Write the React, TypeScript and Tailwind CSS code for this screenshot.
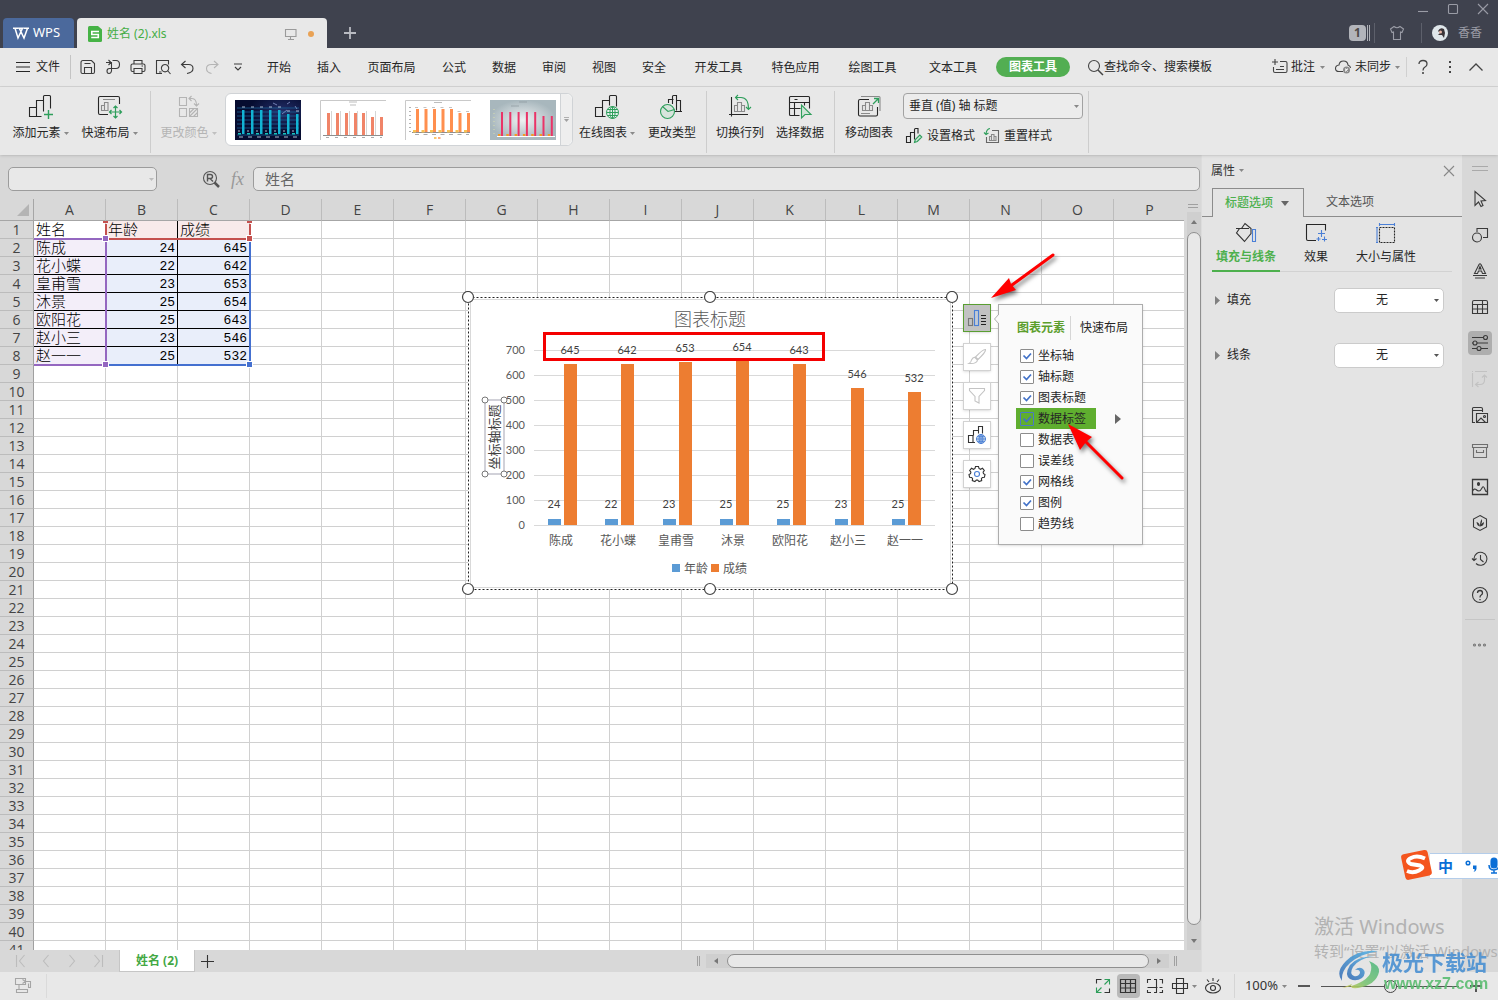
import React, { useState } from "react";
import clsx from "clsx";

type IconProps = { w?: number; h?: number; className?: string; children: React.ReactNode };

const Icon: React.FC<IconProps> = ({ w = 16, h = 16, className, children }) => (
  <svg
    width={w}
    height={h}
    viewBox={`0 0 ${w} ${h}`}
    fill="none"
    stroke="currentColor"
    strokeWidth="1.1"
    className={clsx("shrink-0 overflow-visible", className)}
    aria-hidden="true"
  >
    {children}
  </svg>
);

const Caret: React.FC<{ className?: string }> = ({ className }) => (
  <svg width="5" height="3" viewBox="0 0 5 3" className={clsx("shrink-0", className)} aria-hidden="true">
    <path d="M0 0h5L2.5 3z" fill="currentColor" />
  </svg>
);

const GREEN = "#2e9e5b";
const BLUE = "#4a7fd6";

const Globe: React.FC<{ cx: number; cy: number; r: number; color: string }> = ({ cx, cy, r, color }) => (
  <g stroke={color} fill="none" strokeWidth="1">
    <circle cx={cx} cy={cy} r={r} fill="#e6f0ee" />
    <ellipse cx={cx} cy={cy} rx={r / 2.3} ry={r} />
    <path d={`M${cx - r} ${cy}h${2 * r}M${cx} ${cy - r}v${2 * r}M${cx - r + 1} ${cy - r / 2}h${2 * r - 2}M${cx - r + 1} ${cy + r / 2}h${2 * r - 2}`} />
  </g>
);

/* ---------- ribbon icons ---------- */

const AddElementIcon = () => (
  <Icon w={24} h={24}>
    <path d="M12.5 21.5H.5v-9h7v9M7.5 12.5v-7h7v11M14.5 5.5v-4q0-1 1-1h5q1 0 1 1v12" />
    <path d="M19.5 15v9M15 19.5h9" stroke={GREEN} strokeWidth="1.4" />
  </Icon>
);

const QuickLayoutIcon = () => (
  <Icon w={24} h={24}>
    <path d="M21.5 9V3q0-1.500-1.500-1.500H2Q.5 1.500.5 3v15q0 1.500 1.500 1.500h8" />
    <path d="M5 4.500h12M3.500 15.500v-5h3v5zM6.500 15.500v-8h3.500v8z" stroke="#8a8a8a" />
    <path d="M17.500 11v12M11.500 17h12M15.500 13l2-2 2 2M15.500 21l2 2 2-2M13.500 15l-2 2 2 2M21.500 15l2 2-2 2" stroke={GREEN} strokeWidth="1.200" />
  </Icon>
);

const ChangeColorIcon = () => (
  <Icon w={22} h={22}>
    <path d="M1.500 1.500h7v8h-7zM1.500 12.500h7v8h-7zM11.500 12.500h8v8h-8zM11.500 17l4.500-4.500M11.500 20.500l8-8M15.500 20.500l4-4" />
    <path d="M13.500 0l-2.500 2.500 2.500 2.500M11 2.500h3q4.500 0 4.500 7M16 7.500l2.500 2.500 2.500-2.500" />
  </Icon>
);

const OnlineChartIcon = () => (
  <Icon w={24} h={24}>
    <path d="M10.500 21.500H.5v-9h7v9M7.500 12.500v-7h7v5M14.500 5.500v-4q0-1 1-1h5q1 0 1 1v10" />
    <Globe cx={17.5} cy={17.5} r={6} color={GREEN} />
  </Icon>
);

const ChangeTypeIcon = () => (
  <Icon w={24} h={24}>
    <path d="M8.500 8V4.500h5M12.500 9V1.500q0-1 1-1h3v15M16.500 5.500h4v11M15 16.500h7" />
    <circle cx="7.500" cy="16.500" r="7" stroke={GREEN} fill="#d7e4dc" />
    <path d="M2.500 11.500l5.500 5 6.500-2" stroke={GREEN} />
  </Icon>
);

const SwapAxisIcon = () => (
  <Icon w={22} h={24}>
    <path d="M2.500 2v19.500M0 19.500h19" />
    <path d="M5.500 16.500v-6h3v6zM8.500 16.500v-9h4v9zM12.500 16.500v-6h3v6z" stroke="#8a8a8a" />
    <path d="M9 0L6.500 2.500 9 5M6.500 2.500H12q7.500 0 7.500 11.500M17 12l2.500 2.500L22 12" stroke={GREEN} />
  </Icon>
);

const SelectDataIcon = () => (
  <Icon w={22} h={24}>
    <path d="M10.500 20.500H1.500q-1 0-1-1v-17q0-1 1-1h18q1 0 1 1v11M.5 7.500h20M5.500 4.500h3M5.500 8v5M.5 13.500h11M5.500 14v7M15.500 7.500v3" />
    <path d="M12.500 10v13l3.500-3.500h6z" stroke={GREEN} fill="#cfe4d7" />
  </Icon>
);

const MoveChartIcon = () => (
  <Icon w={24} h={24}>
    <path d="M12 4.500H3q-1.500 0-1.500 1.500v13.500q0 1.500 1.500 1.500h16q1.500 0 1.500-1.500V12" />
    <path d="M5.500 15.500v-5h3v5zM8.500 15.500v-8h4v8zM12.500 15.500v-5h3v5zM4 18.500h9M4 1.500h18q1 0 1 1V16" stroke="#8a8a8a" />
    <path d="M16 9l5-5M17 3.500h4.500v4.500" stroke={GREEN} strokeWidth="1.300" />
  </Icon>
);

/* ---------- title bar ---------- */

const TitleBar = () => (
  <header className="flex h-12 shrink-0 items-end bg-[#3f424e] pl-[3px]">
    <button className="flex h-[30px] w-[71px] items-center gap-1 rounded-t bg-[#4b699c] pl-[10px] text-[13px] text-white">
      <Icon w={16} h={12}>
        <path d="M0 1.300h5.500M10.500 1.300H16M2 1.300L5 11l4.500-9.700H6.300L11 11l3.500-9.700" strokeWidth="1.500" />
      </Icon>
      WPS
    </button>
    <div className="ml-[3px] flex h-[30px] w-[250px] items-center rounded-t bg-[#e8e8e8] pt-px pr-[13px] pl-[11px]">
      <svg width="14" height="16" viewBox="0 0 14 16" className="mr-[5px]" aria-hidden="true">
        <path d="M1.500 0H10l4 3.500v11q0 1.500-1.500 1.500h-11Q0 16 0 14.500v-13Q0 0 1.500 0z" fill="#46b346" />
        <path d="M11 5.500H3.800V8.500h6.500v3H3.200" fill="none" stroke="#fff" strokeWidth="1.600" />
      </svg>
      <span className="text-xs text-[#45ad45]">姓名 (2).xls</span>
      <Icon w={12} h={12} className="ml-auto text-[#9a9a9a]">
        <path d="M.5 1.500h10.500v7H.5zM5.500 8.500v3M3 11.500h6" />
      </Icon>
      <span className="ml-[11px] size-[6px] rounded-full bg-[#e9a255]" />
    </div>
    <button aria-label="新建标签" className="mb-[9px] ml-[17px] text-[#b9bbc2]">
      <Icon w={12} h={12}>
        <path d="M6 0v12M0 6h12" strokeWidth="1.800" />
      </Icon>
    </button>

    <div className="ml-auto flex h-full flex-col text-[#9a9ca6]">
      <div className="flex h-[18px] items-center justify-end gap-5 pr-[10px]">
        <button aria-label="最小化">
          <Icon w={10} h={10}><path d="M0 7.500h10" /></Icon>
        </button>
        <button aria-label="最大化">
          <Icon w={10} h={10}><rect x=".5" y=".5" width="9" height="9" rx="1" /></Icon>
        </button>
        <button aria-label="关闭">
          <Icon w={10} h={10}><path d="M0 0l10 10M10 0L0 10" /></Icon>
        </button>
      </div>
      <div className="flex h-[30px] items-center pr-4">
        <span className="flex h-4 w-[17px] items-center justify-center rounded-sm bg-[#b2b4ba] text-xs font-bold text-[#4d4a48]">1</span>
        <span className="ml-px h-4 w-[3px] border-x border-[#b2b4ba]" />
        <span className="ml-1 h-5 w-px bg-[#5d606b]" />
        <Icon w={14} h={14} className="ml-[15px]">
          <path d="M4 .5L.5 3l1.500 3.500 1.500-.5v7.500h7V6l1.500.5L13.500 3 10 .5q-3 2.500-6 0z" />
        </Icon>
        <span className="ml-[17px] h-5 w-px bg-[#5d606b]" />
        <svg width="16" height="16" viewBox="0 0 16 16" className="ml-[10px]" aria-hidden="true">
          <circle cx="8" cy="8" r="8" fill="#dfe6ea" />
          <path d="M6 6q2-4 6-2l1 4-1 5-2-3-4 0 2-2z" fill="#3a3438" />
          <circle cx="8.500" cy="7" r="1.500" fill="#e8b6a6" />
        </svg>
        <span className="ml-[10px] text-xs">香香</span>
      </div>
    </div>
  </header>
);

/* ---------- menu bar ---------- */

const shortMenus = ["公式", "数据", "审阅", "视图", "安全"];
const longMenus = ["开发工具", "特色应用", "绘图工具"];

const quickTools = [
  { label: "保存", icon: <path d="M1 3.500Q1 1.500 3 1.500h8.500l3 3V13q0 1.500-1.500 1.500H2.500Q1 14.500 1 13zM4.500 14.500v-6h7v6M4.500 4.500h6" /> },
  { label: "输出", icon: <path d="M1 3.500h4.500M3.500 1l2.500 2.500L3.500 6M7.500 1.500H11q3.500 0 3.500 4t-3.500 4H4.500q-2.500 0-2.500 2.500t2 2.500 2.500-2.500V3M6.500 12V9.500" /> },
  { label: "打印", icon: <path d="M4 5V1.500h8V5M4 12.500H2.500Q1 12.500 1 11V6.500Q1 5 2.500 5h11Q15 5 15 6.500V11q0 1.500-1.500 1.500H12M4 9.500h8v5H4zM11.500 7h1.500" /> },
  { label: "打印预览", icon: <path d="M7 14.500H1.500v-13h12v4M4 13h2.500M10 5.500a3.700 3.700 0 1 0 .1 0zM12.500 11.500l3 3.500" /> },
  { label: "撤销", icon: <path d="M5.500 2l-4 3.500L5.500 9M2 5.500h6.500Q13 5.500 13 9.500T7 14.500" /> },
];

const MenuBar = () => (
  <nav className="flex h-[39px] shrink-0 items-center border-b border-[#d3d3d3] bg-[#e8e8e8] text-xs text-[#262626]">
    <button className="flex items-center gap-[6px] pl-4">
      <Icon w={14} h={10}><path d="M0 .5h14M0 5h14M0 9.500h14" /></Icon>
      文件
    </button>
    <span className="ml-[10px] h-6 w-px bg-[#c4c4c4]" />
    <div className="ml-[9px] flex items-center gap-[9px] text-[#3c3c3c]">
      {quickTools.map((tool) => (
        <button key={tool.label} aria-label={tool.label}>
          <Icon>{tool.icon}</Icon>
        </button>
      ))}
      <button aria-label="恢复" className="text-[#b5b5b5]">
        <Icon w={14}><path d="M9 2l4 3.500L9 9M12.500 5.500H6.500Q1.500 5.500 1.500 9.500T6.500 14.500" /></Icon>
      </button>
      <button aria-label="更多" className="ml-[6px]">
        <Icon w={8} h={8}><path d="M0 1h8M1 4l3 3 3-3" /></Icon>
      </button>
    </div>
    <div className="ml-[12px] flex items-center pt-[2px]">
      <button className="w-[50px]">开始</button>
      <button className="w-[50px]">插入</button>
      <button className="w-[75px]">页面布局</button>
      {shortMenus.map((m) => (
        <button key={m} className="w-[50px]">{m}</button>
      ))}
      <div className="ml-px flex">
        {longMenus.map((m) => (
          <button key={m} className="w-[77px]">{m}</button>
        ))}
        <button className="mr-px w-[84px]">文本工具</button>
      </div>
    </div>
    <button className="h-5 w-[74px] rounded-full bg-[#52ae52] font-bold text-white">图表工具</button>
    <button className="ml-[18px] flex items-center">
      <Icon w={15} h={15} className="mr-px text-[#444]"><circle cx="6" cy="6" r="5.500" /><path d="M10 10l5 5" strokeWidth="1.500" /></Icon>
      查找命令、搜索模板
    </button>
    <div className="ml-auto flex items-center">
      <button className="flex items-center">
        <Icon className="mr-[3px] text-[#444]"><path d="M3 0v6M0 3h6M8 2.500h5.500q1.500 0 1.500 1.500v8q0 1.500-1.500 1.500H3Q1.500 13.500 1.500 12V8M4 10.500h8M8 7.500h4" /></Icon>
        批注
        <Caret className="ml-[5px] text-[#888]" />
      </button>
      <button className="ml-[10px] flex items-center">
        <Icon className="mr-1 text-[#444]">
          <path d="M8 12.500H4Q.5 12.500.5 9.500T4 6q.5-4 4.500-4T13 6q2.500 1 2.500 3" />
          <circle cx="11.500" cy="11" r="3.500" fill="#8a8a8a" stroke="none" />
          <path d="M10.200 9.700l2.600 2.600M12.800 9.700l-2.600 2.600" stroke="#fff" />
        </Icon>
        未同步
        <Caret className="ml-1 text-[#888]" />
      </button>
      <span className="ml-[6px] h-5 w-px bg-[#d0d0d0]" />
      <button aria-label="帮助" className="ml-[11px] text-[#444]">
        <Icon w={10} h={14}><path d="M1 4q0-3.500 4-3.500T9 4q0 2-2 3t-2 3.500" strokeWidth="1.300" /><path d="M5 12v2" strokeWidth="1.600" /></Icon>
      </button>
      <button aria-label="更多选项" className="ml-[21px] text-[#444]">
        <Icon w={2} h={12}><path d="M1 0v2M1 5v2M1 10v2" strokeWidth="2" /></Icon>
      </button>
      <button aria-label="收起功能区" className="mr-[15px] ml-[18px] text-[#444]">
        <Icon w={14} h={8}><path d="M.5 7.500L7 1l6.500 6.500" strokeWidth="1.300" /></Icon>
      </button>
    </div>
  </nav>
);

/* ---------- ribbon ---------- */

const RibbonButton: React.FC<{ label: string; icon: React.ReactNode; caret?: boolean; disabled?: boolean; className?: string }> = ({
  label,
  icon,
  caret,
  disabled,
  className,
}) => (
  <button
    disabled={disabled}
    className={clsx("flex h-full shrink-0 flex-col items-center pt-2 text-xs", disabled ? "text-[#b4b4b4]" : "text-[#262626]", className)}
  >
    <span className="flex h-6 items-center">{icon}</span>
    <span className="mt-[6px] flex items-center gap-[3px]">
      {label}
      {caret && <Caret className={disabled ? "text-[#c0c0c0]" : "text-[#8a8a8a]"} />}
    </span>
  </button>
);

const Divider = () => <span className="mt-1 h-[62px] w-px shrink-0 bg-[#cdcdcd]" />;

const tops = [0, 0, 0, 0, 0, 4, 4];

const Thumbs: React.FC = () => (
  <>
    <button aria-label="样式 1">
      <svg width="66" height="40" viewBox="0 0 66 40">
        <defs>
          <radialGradient id="night" cx=".7" cy=".3"><stop offset="0" stopColor="#24306b" /><stop offset="1" stopColor="#060c30" /></radialGradient>
        </defs>
        <rect width="66" height="40" fill="url(#night)" />
        <path d="M2 8h62M2 12h62M2 16h62M2 20h62M2 24h62M2 28h62M2 35h62" stroke="#1a5f94" strokeWidth=".8" />
        <path d="M38 3l4 2M52 4l3-2M60 6l2 3M47 14l5-4" stroke="#9aa8dc" strokeWidth=".7" />
        {tops.map((t, i) => (
          <g key={i}>
            <rect x={7 + i * 9} y={10 + t} width="2.500" height={24 - t} fill="#12b4d4" />
            <rect x={3 + i * 9} y="33" width="3" height="1.500" fill="#19c3bd" />
            <path d={`M${7 + i * 9} ${7 + t}h3M${3 + i * 9} 31h2M${4 + i * 9} 37h4`} stroke="#d5e6f7" strokeWidth=".8" />
          </g>
        ))}
      </svg>
    </button>
    <button aria-label="样式 2">
      <svg width="66" height="40" viewBox="0 0 66 40">
        <rect width="66" height="40" fill="#fff" />
        <path d="M.5 40V.5H66" stroke="#c9c9c9" fill="none" />
        <path d="M29 2h8M30 5h6" stroke="#a0a0a0" strokeWidth=".7" />
        <path d="M11.500 11v24M20.500 11v24M29.500 11v24M37.500 11v24M46.500 11v24M55.500 11v24" stroke="#d5d5d5" />
        <path d="M3 35.500h60" stroke="#8e8e8e" />
        {tops.map((t, i) => (
          <rect key={i} x={7 + i * 9 - (i > 3 ? 1 : 0)} y={13 + t} width="3" height={22 - t} fill="#f08468" />
        ))}
        <path d="M6 37.500h56" stroke="#aaa" strokeDasharray="3 6" />
      </svg>
    </button>
    <button aria-label="样式 3">
      <svg width="66" height="40" viewBox="0 0 66 40">
        <rect width="66" height="40" fill="#fff" />
        <path d="M.5 40V.5H66" stroke="#c9c9c9" fill="none" />
        <path d="M29 2.500h8" stroke="#a0a0a0" strokeWidth=".7" />
        <path d="M5 7v26" stroke="#999" strokeDasharray="1 3" strokeWidth="1.500" />
        <path d="M7 32.500h58" stroke="#8e8e8e" />
        {tops.map((t, i) => (
          <g key={i}>
            <rect x={11 + i * 8.500} y={9 + t} width="3" height={23 - t} fill="#ff8f4f" />
            <rect x={8 + i * 8.500} y="30" width="3" height="2.500" fill="#f8c355" />
            <path d={`M${10 + i * 8.500} ${7.500 + t}h3`} stroke="#9a9a9a" strokeWidth=".6" />
          </g>
        ))}
        <path d="M10 34.500h54" stroke="#888" strokeDasharray="4 4.500" strokeWidth=".7" />
        <path d="M29 38h2.500" stroke="#f8b93a" strokeWidth="1.500" /><path d="M33 38h2.500" stroke="#ff8f4f" strokeWidth="1.500" />
      </svg>
    </button>
    <button aria-label="样式 4">
      <svg width="66" height="40" viewBox="0 0 66 40">
        <defs>
          <radialGradient id="steel"><stop offset="0" stopColor="#eef1f2" /><stop offset="1" stopColor="#a8b7bd" /></radialGradient>
        </defs>
        <rect width="66" height="40" fill="url(#steel)" />
        <path d="M29 2h8M21 6h8" stroke="#8d999e" strokeWidth=".7" />
        <path d="M4 9v28" stroke="#d7ddb0" strokeDasharray="1 3" />
        {tops.map((t, i) => (
          <g key={i}>
            <rect x={11 + i * 8.300} y={12 + t} width="2" height={24 - t} fill="#ea3468" />
            <rect x={8 + i * 8.300} y="34" width="2.500" height="2" fill="#f59a23" />
          </g>
        ))}
        <path d="M7 36.500h58" stroke="#fff" />
      </svg>
    </button>
  </>
);

const Ribbon = () => (
  <section className="relative z-10 flex h-[68px] shrink-0 bg-[#e8e8e8] pl-[6px] text-xs text-[#262626] shadow-sm">
    <RibbonButton label="添加元素" icon={<AddElementIcon />} caret className="w-[69px]" />
    <RibbonButton label="快速布局" icon={<QuickLayoutIcon />} caret className="mr-[6px] w-[69px]" />
    <Divider />
    <RibbonButton label="更改颜色" icon={<ChangeColorIcon />} caret disabled className="ml-[3px] w-[69px]" />
    <div className="mt-[6px] ml-[2px] flex h-[53px] w-[348px] shrink-0 items-center rounded-md border border-[#d0d3d6] bg-white pl-[9px]">
      <div className="flex gap-[19px]">
        <Thumbs />
      </div>
      <button aria-label="更多样式" className="ml-auto flex h-full w-3 flex-col items-center justify-center gap-px rounded-r-md border-l border-[#d0d3d6] bg-[#eeeeee] text-[#a0a0a0]">
        <span className="h-px w-[5px] bg-[#b0b0b0]" />
        <Caret />
      </button>
    </div>
    <RibbonButton label="在线图表" icon={<OnlineChartIcon />} caret className="ml-[1px] w-[66px]" />
    <RibbonButton label="更改类型" icon={<ChangeTypeIcon />} className="mr-[2px] w-[64px]" />
    <Divider />
    <RibbonButton label="切换行列" icon={<SwapAxisIcon />} className="ml-[3px] w-[60px]" />
    <RibbonButton label="选择数据" icon={<SelectDataIcon />} className="mr-1 w-[60px]" />
    <Divider />
    <RibbonButton label="移动图表" icon={<MoveChartIcon />} className="mr-1 ml-1 w-[60px]" />
    <div className="mr-[5px] w-[180px] shrink-0 pt-[6px]">
      <div className="grid items-center">
        <select
          aria-label="图表元素"
          className="col-start-1 row-start-1 h-[26px] appearance-none rounded border border-[#a2a2a2] bg-[#ececec] pl-[5px]"
        >
          <option>垂直 (值) 轴 标题</option>
        </select>
        <Caret className="pointer-events-none col-start-1 row-start-1 mr-1 justify-self-end text-[#888]" />
      </div>
      <div className="mt-[9px] flex items-center pl-[3px]">
        <button className="flex items-center gap-[5px]">
          <Icon>
            <path d="M.5 14.500v-6h4v6zM4.500 14.500v-10h4v7M8.500 8V1.500q0-1 1-1h2.500v5" />
            <path d="M8.500 14.500l.8-3 4.500-4.500 2 2-4.500 4.500z" stroke={GREEN} fill="#cfe4d7" />
          </Icon>
          设置格式
        </button>
        <button className="ml-[9px] flex items-center gap-1">
          <Icon>
            <path d="M8 2.500h6.500v12h-12V9" stroke="#666" />
            <path d="M5.500 12.500v-4h2v4zM7.500 12.500v-6h2.500v6zM10 12.500v-4h2v4z" stroke="#8a8a8a" />
            <path d="M6 .5Q2.500 1 2 6M0 4.500l2 2 2.500-1.500" stroke={GREEN} />
          </Icon>
          重置样式
        </button>
      </div>
    </div>
    <Divider />
  </section>
);

/* ---------- worksheet ---------- */

const columns = "ABCDEFGHIJKLMNOP".split("");
const rows = Array.from({ length: 41 }, (_, i) => i + 1);

const people = [
  { name: "陈成", age: 24, score: 645 },
  { name: "花小蝶", age: 22, score: 642 },
  { name: "皇甫雪", age: 23, score: 653 },
  { name: "沐景", age: 25, score: 654 },
  { name: "欧阳花", age: 25, score: 643 },
  { name: "赵小三", age: 23, score: 546 },
  { name: "赵一一", age: 25, score: 532 },
];

const cellText = (row: number, col: number) => {
  if (row > 8 || col > 2) return "";
  if (row === 1) return ["姓名", "年龄", "成绩"][col];
  const p = people[row - 2];
  return [p.name, p.age, p.score][col];
};

const cellClass = (row: number, col: number) => {
  if (row > 8 || col > 2) return "border-[#d0d0d0] leading-[17px]";
  const number = row > 1 && col > 0;
  return clsx(
    "text-black",
    number
      ? "pt-[3px] pr-[2px] text-right font-['Liberation_Mono',monospace] text-[13px] leading-[14px]"
      : "pb-[2px] pl-[2px] text-left font-['Noto_Sans_CJK_SC',sans-serif] text-[15px] leading-[15px] font-light",
    row === 1 && col > 0 && "bg-[#f8eaea]",
    row > 1 && (col === 0 ? "bg-[#f3eef9]" : "bg-[#e9eefa]"),
    row > 1 && row < 8 ? "border-b-black" : "border-b-[#d0d0d0]",
    col === 1 ? "border-r-black" : "border-r-[#d0d0d0]"
  );
};

const Grid = () => (
  <table className="w-[1186px] table-fixed border-separate border-spacing-0 whitespace-nowrap">
    <thead>
      <tr className="h-[22px] bg-[#d8d8d8] font-['Open_Sans',sans-serif] text-sm text-[#444]">
        <th className="w-[34px] border-r border-b border-[#a6a6a6] p-0">
          <svg width="12" height="12" viewBox="0 0 12 12" className="mr-1 ml-auto" aria-hidden="true">
            <path d="M12 0v12H0z" fill="#b4b4b4" />
          </svg>
        </th>
        {columns.map((c) => (
          <th key={c} className="border-r border-b border-r-[#bcbcbc] border-b-[#a6a6a6] p-0 leading-5 font-normal">
            {c}
          </th>
        ))}
      </tr>
    </thead>
    <tbody>
      {rows.map((r) => (
        <tr key={r} className="h-[18px]">
          <th className="border-r border-b border-r-[#a0a0a0] border-b-[#bcbcbc] bg-[#d8d8d8] p-0 font-['Open_Sans',sans-serif] text-sm leading-[17px] font-normal text-[#444]">
            {r}
          </th>
          {columns.map((c, i) => (
            <td key={c} className={clsx("border-r border-b p-0", cellClass(r, i))}>
              {cellText(r, i)}
            </td>
          ))}
        </tr>
      ))}
    </tbody>
  </table>
);

const Handle: React.FC<{ className: string }> = ({ className }) => (
  <span className={clsx("absolute size-[7px] border border-white", className)} />
);

/* coloured outlines round the three data ranges of the chart */
const RangeOutlines = () => (
  <div className="pointer-events-none absolute top-[22px] left-[34px] h-[145px] w-[218px]">
    <span className="absolute top-[17px] left-0 h-[2px] w-[72px] bg-[#9467c0]" />
    <span className="absolute top-[17px] left-[71px] h-[128px] w-[2px] bg-[#9467c0]" />
    <span className="absolute top-[143px] left-0 h-[2px] w-[72px] bg-[#9467c0]" />
    <span className="absolute top-[143px] left-[72px] h-[2px] w-[144px] bg-[#4470d0]" />
    <span className="absolute top-[18px] left-[215px] h-[126px] w-[2px] bg-[#4470d0]" />
    <span className="absolute top-[17px] left-[72px] h-[2px] w-[144px] bg-[#c4504e]" />
    <span className="absolute top-[3px] left-[71px] h-3 w-[2px] bg-[#c4504e]" />
    <span className="absolute top-[3px] left-[215px] h-3 w-[2px] bg-[#c4504e]" />
    <span className="absolute top-0 left-[69px] h-[2px] w-[5px] bg-[#c4504e]" />
    <span className="absolute top-0 left-[213px] h-[2px] w-[5px] bg-[#c4504e]" />
    <Handle className="top-[14px] left-[68px] bg-[#9467c0]" />
    <Handle className="top-[14px] left-[212px] bg-[#c4504e]" />
    <Handle className="top-[140px] left-[68px] bg-[#9467c0]" />
    <Handle className="top-[140px] left-[212px] bg-[#4470d0]" />
  </div>
);

const BASE = 234;
const ticks = [0, 100, 200, 300, 400, 500, 600, 700];
const corners = [
  [7, 6], [249, 6], [491, 6],
  [7, 298], [249, 298], [491, 298],
];
const titleCorners = [[24, 109], [43, 109], [24, 183], [43, 183]];

const Chart = () => (
  <svg
    width="498"
    height="305"
    viewBox="0 0 498 305"
    role="img"
    aria-label="图表标题"
    className="absolute top-[92px] left-[461px] font-['Lato','Noto_Sans_CJK_SC',sans-serif]"
  >
    <rect x="7" y="6" width="484" height="292" fill="#fff" />
    <rect x="9.500" y="8.500" width="480" height="288" fill="none" stroke="#d9d9d9" />
    <rect x="7.500" y="6.500" width="484" height="292" fill="none" stroke="#222" strokeDasharray="2 2" />
    <text x="249" y="35" textAnchor="middle" fontSize="18" fontWeight="300" fill="#595959">图表标题</text>

    {ticks.map((t) => (
      <g key={t}>
        <path d={`M73 ${BASE + 0.5 - t / 4}h401`} stroke="#d9d9d9" />
        <text x="64" y={BASE + 4 - t / 4} textAnchor="end" fontSize="11" fill="#595959">{t}</text>
      </g>
    ))}

    {people.map((p, i) => {
      const cx = Math.round(101 + i * 57.3);
      const ageH = Math.round(p.age / 4);
      const scoreH = Math.round(p.score / 4);
      return (
        <g key={p.name} textAnchor="middle">
          <rect x={cx - 14} y={BASE - ageH} width="13" height={ageH} fill="#5b9bd5" />
          <rect x={cx + 2} y={BASE - scoreH} width="13" height={scoreH} fill="#ed7d31" />
          <text x={cx - 8} y={BASE - ageH - 11} fontSize="11" fill="#404040">{p.age}</text>
          <text x={cx + 8} y={BASE - scoreH - 10} fontSize="11" fill="#404040">{p.score}</text>
          <text x={cx - 1} y="254" fontSize="12" fill="#595959">{p.name}</text>
        </g>
      );
    })}

    <rect x="211" y="273" width="8" height="8" fill="#5b9bd5" />
    <text x="223" y="282" fontSize="12" fill="#595959">年龄</text>
    <rect x="250" y="273" width="8" height="8" fill="#ed7d31" />
    <text x="262" y="282" fontSize="12" fill="#595959">成绩</text>

    <rect x="24" y="109" width="19" height="74" fill="none" stroke="#a3a3b2" />
    <text transform="translate(38 146) rotate(-90)" textAnchor="middle" fontSize="13" fill="#404040">坐标轴标题</text>
    {titleCorners.map(([x, y]) => (
      <circle key={`${x}-${y}`} cx={x} cy={y} r="3" fill="#fff" stroke="#777" />
    ))}
    {corners.map(([x, y]) => (
      <circle key={`${x}-${y}`} cx={x} cy={y} r="5.500" fill="#fff" stroke="#444" strokeWidth="1.200" />
    ))}
    <rect x="83.500" y="42.500" width="279" height="26" fill="none" stroke="#f40000" strokeWidth="3" />
  </svg>
);

const chartTools = [
  {
    label: "图表元素",
    active: true,
    icon: (
      <Icon w={18} h={16}>
        <rect x=".5" y="8.500" width="4" height="7" stroke="#777" />
        <rect x="6.500" y=".5" width="4" height="15" stroke={BLUE} fill="#c2c9d4" />
        <path d="M13 5.500h5M13 8.500h5M13 11.500h5M13 14.500h5" stroke="#222" />
      </Icon>
    ),
  },
  {
    label: "图表样式",
    icon: (
      <Icon w={18} h={16} className="text-[#c4c4c4]">
        <path d="M17.500.5Q18 3 10 10.500L7.500 8Q15 0 17.500.5zM7 8.500l2.500 2.500Q9 15 1 14.500q2-1 2.500-3.500Q5 8 7 8.500z" />
      </Icon>
    ),
  },
  {
    label: "图表筛选器",
    icon: (
      <Icon className="text-[#c4c4c4]"><path d="M.5.5h15v2L10 8.500V15l-4-2V8.500L.5 2.500z" /></Icon>
    ),
  },
  {
    label: "在线图表",
    icon: (
      <Icon w={18} h={18} className="text-[#333]">
        <path d="M7 16.500H.5v-7h4.500v7M5.500 9.500v-5h5v3M10.500 4.500V.5h4v7" />
        <Globe cx={13} cy={13} r={4.5} color={BLUE} />
      </Icon>
    ),
  },
  {
    label: "设置",
    icon: (
      <Icon className="text-[#333]">
        <path d="M6.500.5h3l.5 2 1.500.8 2-1 1.800 2.200-1.200 1.600.4 1.600 1.500.8-.6 2.700-2 .2-1 1.300.3 1.900-2.600 1-1.400-1.500H7.300L5.900 15.600l-2.600-1 .3-1.900-1-1.300-2-.2L0 8.500l1.500-.8.4-1.600L.7 4.500 2.500 2.300l2 1L6 2.500z" />
        <circle cx="8" cy="8" r="2.500" stroke={BLUE} />
      </Icon>
    ),
  },
];

const ChartTools = () => (
  <div className="absolute top-[105px] left-[963px] flex flex-col gap-[11px]">
    {chartTools.map((t) => (
      <button
        key={t.label}
        aria-label={t.label}
        className={clsx(
          "flex size-7 items-center justify-center border shadow",
          t.active ? "border-[#5a9e32] bg-[#c2c2c2]" : "border-[#d2d2d2] bg-white"
        )}
      >
        {t.icon}
      </button>
    ))}
  </div>
);

const initialElements = [
  { label: "坐标轴", on: true },
  { label: "轴标题", on: true },
  { label: "图表标题", on: true },
  { label: "数据标签", on: true },
  { label: "数据表", on: false },
  { label: "误差线", on: false },
  { label: "网格线", on: true },
  { label: "图例", on: true },
  { label: "趋势线", on: false },
];

const ElementsPopover: React.FC = () => {
  const [elements, setElements] = useState(initialElements);

  const toggle = (label: string) => {
    setElements((prev) => prev.map((e) => (e.label === label ? { ...e, on: !e.on } : e)));
  };

  return (
    <div className="absolute top-[105px] left-[998px] h-[241px] w-[145px] border border-[#adadad] bg-[#fafafa] pt-[11px] pl-[17px] text-xs text-[#262626] shadow">
      <svg width="5" height="10" viewBox="0 0 5 10" className="absolute top-[9px] -left-[5px]" aria-hidden="true">
        <path d="M5 0L.5 5 5 10" fill="#fafafa" stroke="#adadad" />
      </svg>
      <div className="flex items-center">
        <button className="pl-px font-bold text-[#5c9e2c]">图表元素</button>
        <span className="mr-[9px] ml-[5px] h-6 w-px bg-[#d6d6d6]" />
        <button>快速布局</button>
      </div>
      <div className="mt-[5px]">
        {elements.map((e) => {
          const current = e.label === "数据标签";
          return (
            <div key={e.label} className="flex items-center">
              <label className={clsx("flex h-[21px] w-20 items-center gap-1 pl-1", current && "bg-[#5fae2f]")}>
                <span className="grid">
                  <input
                    type="checkbox"
                    checked={e.on}
                    onChange={() => toggle(e.label)}
                    className={clsx(
                      "col-start-1 row-start-1 size-[14px] appearance-none rounded-[1px] border",
                      current ? "border-[#4a78c8]" : "border-[#8c8c8c] bg-white"
                    )}
                  />
                  {e.on && (
                    <svg width="14" height="14" viewBox="0 0 14 14" className="pointer-events-none col-start-1 row-start-1" aria-hidden="true">
                      <path d="M3.500 6.500l3 3 4.500-5" fill="none" stroke="#4272c8" strokeWidth="1.700" />
                    </svg>
                  )}
                </span>
                {e.label}
              </label>
              {current && (
                <svg width="6" height="10" viewBox="0 0 6 10" className="ml-[19px]" aria-hidden="true">
                  <path d="M0 0l6 5-6 5z" fill="#666" />
                </svg>
              )}
            </div>
          );
        })}
      </div>
    </div>
  );
};

const Arrows = () => (
  <svg width="160" height="250" viewBox="0 0 160 250" className="pointer-events-none absolute top-[46px] left-[980px] drop-shadow-[2px_3px_2px_rgba(0,0,0,0.5)]" aria-hidden="true">
    <path d="M73 10L32 40" stroke="#f00" strokeWidth="3" strokeLinecap="round" />
    <path d="M11 53l18-20 2 6 5 6z" fill="#f00" />
    <path d="M142 233l-36-36" stroke="#f00" strokeWidth="3" strokeLinecap="round" />
    <path d="M88 179l24 13-6 5-6 8z" fill="#f00" />
  </svg>
);

const FormulaBar = () => (
  <div className="flex h-11 shrink-0 items-center bg-[#d8d8d8] pt-1 pr-px pl-2">
    <div className="grid items-center">
      <input aria-label="名称框" className="col-start-1 row-start-1 h-6 w-[149px] rounded-[5px] border border-[#9c9c9c] bg-[#e8e8e8] px-2 text-xs" />
      <Caret className="col-start-1 row-start-1 mr-[3px] justify-self-end text-[#bdbdbd]" />
    </div>
    <button aria-label="浏览公式结果" className="ml-[46px] text-[#555]">
      <Icon w={17} h={17}>
        <circle cx="7" cy="7" r="6.500" />
        <path d="M4.500 10.500v-7h3q2 0 2 2t-2 2h-3M7 7.500l3 3" strokeWidth="1.400" />
        <path d="M11.500 11.500l4.500 4.500" strokeWidth="2.500" />
      </Icon>
    </button>
    <button aria-label="插入函数" className="ml-[11px] font-['Liberation_Serif',serif] text-lg leading-6 text-[#999] italic">fx</button>
    <input
      aria-label="编辑栏"
      defaultValue="姓名"
      className="ml-[9px] h-6 min-w-0 flex-1 rounded-[5px] border border-[#9c9c9c] bg-[#e8e8e8] pb-[2px] pl-[11px] font-['Noto_Sans_CJK_SC',sans-serif] text-[15px] text-[#666]"
    />
  </div>
);

const VerticalScroll = () => (
  <div className="flex w-[17px] shrink-0 flex-col items-end bg-[#d8d8d8]">
    <span className="mt-[5px] mr-[3px] h-1 w-[10px] border-y border-[#a0a0a0]" />
    <div className="mt-1 flex w-[14px] flex-1 flex-col items-center bg-[#cfcfcf]">
      <svg width="6" height="4" viewBox="0 0 6 4" className="mt-2" aria-hidden="true"><path d="M0 4h6L3 0z" fill="#777" /></svg>
      <div className="mt-2 w-[14px] flex-1 rounded-full border border-[#8f8f8f] bg-[#e8e8e8]" />
      <svg width="6" height="4" viewBox="0 0 6 4" className="mt-[14px] mb-[7px]" aria-hidden="true"><path d="M0 0h6L3 4z" fill="#777" /></svg>
    </div>
  </div>
);

const SheetTabs = () => (
  <div className="flex h-[22px] shrink-0 items-center bg-[#d8d8d8] pr-6">
    <div className="flex w-[119px] items-center gap-[17px] pl-4 text-[#bcbcbc]">
      <button aria-label="第一张"><Icon w={9} h={12}><path d="M.5 0v12M8.500 0l-5 6 5 6" /></Icon></button>
      <button aria-label="上一张"><Icon w={9} h={12}><path d="M6.500 0l-5 6 5 6" /></Icon></button>
      <button aria-label="下一张"><Icon w={9} h={12}><path d="M1.500 0l5 6-5 6" /></Icon></button>
      <button aria-label="最后一张"><Icon w={9} h={12}><path d="M8.500 0v12M.5 0l5 6-5 6" /></Icon></button>
    </div>
    <button className="h-[22px] w-[76px] border-x border-b border-[#c6c6c6] bg-white text-xs font-bold text-[#43a843]">姓名 (2)</button>
    <button aria-label="新建工作表" className="ml-[6px] text-[#333]">
      <Icon w={13} h={13}><path d="M6.500 0v13M0 6.500h13" /></Icon>
    </button>
    <span className="ml-auto h-[10px] w-[3px] border-x border-[#a0a0a0]" />
    <div className="ml-[6px] flex h-[14px] w-[463px] items-center justify-between bg-[#cfcfcf] px-2">
      <svg width="4" height="6" viewBox="0 0 4 6" aria-hidden="true"><path d="M4 0v6L0 3z" fill="#777" /></svg>
      <div className="h-[14px] w-[422px] rounded-full border border-[#8f8f8f] bg-[#e8e8e8]" />
      <svg width="4" height="6" viewBox="0 0 4 6" aria-hidden="true"><path d="M0 0v6l4-3z" fill="#777" /></svg>
    </div>
    <span className="ml-[5px] h-[10px] w-[3px] border-x border-[#a0a0a0]" />
  </div>
);

const Worksheet = () => (
  <main className="flex min-w-0 flex-1 flex-col">
    <FormulaBar />
    <div className="flex min-h-0 flex-1">
      <div className="relative min-w-0 flex-1 overflow-hidden bg-white">
        <Grid />
        <RangeOutlines />
        <Chart />
        <ChartTools />
        <ElementsPopover />
        <Arrows />
      </div>
      <VerticalScroll />
    </div>
    <SheetTabs />
  </main>
);

/* ---------- property panel ---------- */

const PropertyRow: React.FC<{ label: string; id: string }> = ({ label, id }) => (
  <div className="flex h-6 items-center pr-[18px] pl-[13px]">
    <svg width="5" height="9" viewBox="0 0 5 9" aria-hidden="true"><path d="M0 0l5 4.500L0 9z" fill="#808080" /></svg>
    <label htmlFor={id} className="ml-[7px]">{label}</label>
    <div className="ml-auto grid items-center">
      <select id={id} className="col-start-1 row-start-1 h-[25px] w-[110px] appearance-none rounded-[5px] border border-[#cbcbcb] bg-white pr-[14px] text-center [text-align-last:center]">
        <option>无</option>
      </select>
      <Caret className="pointer-events-none col-start-1 row-start-1 mr-[5px] justify-self-end text-[#555]" />
    </div>
  </div>
);

const PropertyPanel = () => (
  <aside className="flex w-[261px] shrink-0 flex-col border-l border-[#dcdcdc] bg-[#e4e4e4] text-xs text-[#262626]">
    <div className="flex h-[33px] items-center pr-2 pb-[2px] pl-[9px]">
      <button className="flex items-center gap-1 text-[#333]">
        属性
        <Caret className="text-[#888]" />
      </button>
      <button aria-label="关闭面板" className="ml-auto text-[#888]">
        <Icon w={10} h={10}><path d="M0 0l10 10M10 0L0 10" /></Icon>
      </button>
    </div>
    <div className="flex h-[29px]">
      <span className="w-[10px] border-b border-[#8c8c8c]" />
      <button className="flex w-[92px] items-center gap-2 border border-b-0 border-[#8c8c8c] pl-3 font-medium text-[#4db04d]">
        标题选项
        <svg width="8" height="5" viewBox="0 0 8 5" aria-hidden="true"><path d="M0 0h8L4 5z" fill="#666" /></svg>
      </button>
      <button className="flex-1 border-b border-[#8c8c8c] pl-[22px] text-left text-[#555]">文本选项</button>
    </div>
    <div className="mr-[10px] ml-[10px] flex h-[55px] border-b border-[#d2d2d2]">
      <button className="flex h-[55px] w-[68px] flex-col items-center border-b-2 border-[#4db04d] pt-[6px] font-bold text-[#4db04d]">
        <Icon w={20} h={20} className="text-[#333]">
          <path d="M5.500 5.500L9 .5l6 5v5L8.500 18.500.5 10l3-4.500M0 5.500h13" />
          <path d="M16.500 6.500h3v12h-3z" stroke={BLUE} />
        </Icon>
        <span className="mt-[6px]">填充与线条</span>
      </button>
      <button className="flex w-[72px] flex-col items-center pt-[6px]">
        <Icon w={20} h={20}>
          <path d="M10 17.500H2q-1.500 0-1.500-1.500V1.500h19v6" />
          <path d="M15.500 7v7M12 10.500h7M18.500 13.500v5M16 16.500h5M12.500 14v4M10.500 16h4" stroke={BLUE} />
        </Icon>
        <span className="mt-[6px]">效果</span>
      </button>
      <button className="flex w-[68px] flex-col items-center pt-[6px]">
        <Icon w={20} h={20}>
          <rect x="3.500" y="4.500" width="15" height="15" strokeDasharray="2 1" />
          <path d="M3.500 1.500h15M3.500 0v3M18.500 0v3M1 4.500v15M0 4.500h2M0 19.500h2" stroke={BLUE} />
        </Icon>
        <span className="mt-[6px]">大小与属性</span>
      </button>
    </div>
    <div className="flex flex-col gap-[31px] pt-4">
      <PropertyRow label="填充" id="fill" />
      <PropertyRow label="线条" id="line" />
    </div>
  </aside>
);

const railItems = [
  { label: "选择", icon: <path d="M3 .5v14l3.500-3.500 2.500 4.500 2-1-2-4.500 4.500-.5z" /> },
  { label: "形状", icon: <><path d="M5 5V1.500h10.500v9H11" /><circle cx="5" cy="10.500" r="4.500" /></> },
  { label: "艺术字", icon: <><path d="M2.500 10.500L7 1.500q1-1.500 2 0l4.500 9h-3L9.500 8h-3l-1 2.500zM7 6l1-2.500L9 6z" /><path d="M1 12.500h14M3 15h10" /></> },
  { label: "表格", icon: <path d="M.5 3q0-1.500 1.500-1.500h12Q15.500 1.500 15.500 3v11.500H.5zM.5 5.500h15M.5 10h15M5.500 5.500v9M10.500 1.500v13" /> },
  { label: "属性", active: true, icon: <><path d="M0 2.500h11M5 8h11M0 13.500h5M9 13.500h7M0 8h1" /><circle cx="13.500" cy="2.500" r="2" /><circle cx="3" cy="8" r="2" /><circle cx="7" cy="13.500" r="2" /></> },
  { label: "转置", dim: true, icon: <path d="M.5 2v14M3 .5h12M0 .5h1M4 13.500h4q4.500 0 4.500-4.500V4M6.500 11l-3 2.500 3 2.500M10 6.500L12.500 4 15 6.500" /> },
  { label: "图片库", icon: <><path d="M3 15.500H.5v-14q0-1 1-1H9q1.500 0 1.500 1.500v3M.5 3.500h10" /><path d="M4.500 6.500h11v9h-11zM5 15l4-4 4.500 4.500" /><circle cx="12.500" cy="9.500" r="1" /></> },
  { label: "归档", muted: true, icon: <path d="M.5 1.500h15v3H.5zM1.500 4.500v10h13v-10M4.500 7v2.500h7V7" /> },
  { label: "图像", icon: <><path d="M.5.5h15v15H.5z" strokeWidth="1.300" /><path d="M.5 12q2-3 3.500-1.500T7 12t3-3 3 1.500 2.500 0" /><ellipse cx="6.500" cy="5" rx="1" ry="1.500" fill="currentColor" /></> },
  { label: "环保", icon: <><path d="M8 .5l6.500 3.500v8L8 15.500 1.500 12V4z" /><path d="M8 11.500Q5 11 4.500 7q3 .5 3.500 4.500zM8 11q0-5 2-7 .5 3-1 5l3-2q0 4-4 4.500z" fill="currentColor" stroke="none" /></> },
  { label: "历史记录", icon: <path d="M4 12.500a6.500 6.500 0 1 0-2-5v1.500M0 7.500l2 2 2.500-2M8.500 4v4.500l3 2.500" /> },
  { label: "帮助", icon: <><circle cx="8" cy="8" r="7.500" /><path d="M5.500 6q0-2.500 2.500-2.500T10.500 6q0 1.300-1.300 2T8 10.500M8 12v1.300" strokeWidth="1.300" /></> },
];

const ToolRail = () => (
  <aside className="flex w-9 shrink-0 flex-col items-center bg-[#d8d8d8] pr-px text-[#3a3a3a]">
    <span className="mt-[11px] h-[5px] w-4 border-y border-[#aaa]" />
    <div className="mt-4 flex flex-col gap-3">
      {railItems.map((item) => (
        <button
          key={item.label}
          aria-label={item.label}
          className={clsx(
            "flex size-6 items-center justify-center rounded",
            item.active && "bg-[#aeaeae]",
            item.dim && "text-[#c2c2c2]",
            item.muted && "text-[#6e6e6e]"
          )}
        >
          <Icon>{item.icon}</Icon>
        </button>
      ))}
    </div>
    <span className="mt-3 h-px w-[30px] bg-[#c6c6c6]" />
    <button aria-label="更多" className="mt-[23px] text-[#777]">
      <Icon w={13} h={4}><circle cx="1.500" cy="2" r="1" /><circle cx="6.500" cy="2" r="1" /><circle cx="11.500" cy="2" r="1" /></Icon>
    </button>
  </aside>
);

/* ---------- status bar ---------- */

const StatusBar = () => (
  <footer className="flex h-7 shrink-0 items-center bg-[#e8e8e8] pr-4 pl-[15px] text-[#333]">
    <Icon className="text-[#a5a5a5]">
      <path d="M.5.5h10v6H.5zM7.500 1.500l3 2-3 2M10.500 3.500h5v6h-2v-4M4 6.500v5M1.500 11.500h11v3h-11z" />
    </Icon>
    <span className="ml-[15px] h-6 w-px bg-[#dadada]" />
    <div className="ml-auto flex items-center">
      <button aria-label="全屏显示">
        <Icon w={14} h={14}>
          <path d="M.5 4.500v-4h5M13.500 9.500v4h-5" />
          <path d="M8.500.5h5v5M13.500.5l-5 5M5.500 13.500h-5v-5M.5 13.500l5-5" stroke={GREEN} />
        </Icon>
      </button>
      <button aria-label="普通视图" className="ml-[7px] flex h-6 w-[23px] items-center justify-center rounded bg-[#b9b9b9]">
        <Icon><path d="M.5 1.500h15v13H.5zM.5 5.500h15M.5 10h15M5.500 1.500v13M10.500 1.500v13" strokeWidth="1.200" /></Icon>
      </button>
      <button aria-label="分页预览" className="ml-[7px]">
        <Icon><path d="M.5 5V1.500H4M7 1.500h2.500v13H7M4 14.500H.5V12M.5 9.500h10M12.500 1.500h3v4M15.500 9.500h-3M15.500 12v2.500h-3" /></Icon>
      </button>
      <button aria-label="页面布局视图" className="ml-[9px] flex items-center gap-[4px]">
        <Icon><path d="M4.500.5h7v15h-7zM.5 5.500h15v5H.5z" /></Icon>
        <Caret className="text-[#888]" />
      </button>
      <button aria-label="护眼模式" className="ml-2">
        <Icon>
          <ellipse cx="8" cy="10" rx="7.500" ry="5" />
          <circle cx="8" cy="10" r="2.500" />
          <path d="M8 0v3M2 1.500l2 2.500M14 1.500L12 4" />
        </Icon>
      </button>
      <span className="ml-[13px] h-6 w-px bg-[#d5d5d5]" />
      <button className="ml-[10px] flex items-center gap-1 text-[13px]">
        100%
        <Caret className="text-[#888]" />
      </button>
      <button aria-label="缩小" className="ml-[11px]">
        <Icon w={12} h={12}><path d="M0 6h12" strokeWidth="1.600" /></Icon>
      </button>
      <input
        type="range"
        aria-label="缩放比例"
        defaultValue={50}
        className="ml-[11px] h-3 w-[138px] appearance-none bg-transparent [&::-webkit-slider-runnable-track]:h-px [&::-webkit-slider-runnable-track]:bg-[#555] [&::-webkit-slider-thumb]:-mt-[6px] [&::-webkit-slider-thumb]:size-[13px] [&::-webkit-slider-thumb]:appearance-none [&::-webkit-slider-thumb]:rounded-full [&::-webkit-slider-thumb]:border [&::-webkit-slider-thumb]:border-[#444] [&::-webkit-slider-thumb]:bg-[#e8e8e8]"
      />
      <button aria-label="放大" className="ml-[11px]">
        <Icon w={12} h={12}><path d="M6 0v12M0 6h12" strokeWidth="1.600" /></Icon>
      </button>
    </div>
  </footer>
);

/* ---------- things floating over the window ---------- */

const ImeBar = () => (
  <div className="absolute right-0 bottom-[121px] z-20 flex h-[26px] w-[68px] items-center border-y border-[#b4cdea] bg-white text-[#0a6ed6]">
    <svg width="34" height="32" viewBox="0 0 34 32" className="absolute -top-[5px] -left-[30px]" aria-hidden="true">
      <rect x="3" y="3" width="27" height="26" rx="3" fill="#f4551e" transform="rotate(-12 16 16)" />
      <path d="M25 9.500Q17 6 11 9t0 6l9 1.500q5 2-1 5T7 22" fill="none" stroke="#fff" strokeWidth="4" />
    </svg>
    <span className="ml-2 text-[15px] leading-5 font-bold">中</span>
    <Icon w={12} h={12} className="ml-3">
      <circle cx="3" cy="3" r="1.800" strokeWidth="1.500" />
      <path d="M8 5.500h3.500V9q-.5 2.500-3 3 1.500-1.500 1-3H8z" fill="currentColor" stroke="none" />
    </Icon>
    <Icon w={10} h={16} className="ml-[11px]">
      <rect x="3" y="0" width="6" height="10" rx="3" fill="currentColor" />
      <path d="M1 7q0 5 5 5t5-5M6 12v3M3 15h6" strokeWidth="1.500" />
    </Icon>
  </div>
);

const Watermarks = () => (
  <div className="pointer-events-none absolute right-0 bottom-0 z-10 h-[88px] w-[184px] overflow-hidden whitespace-nowrap">
    <p className="text-xl leading-[30px] text-[#b2b2b2]">激活 Windows</p>
    <p className="text-[15px] leading-[18px] text-[#b2b2b2]">转到“设置”以激活 Windows</p>
    <div className="absolute top-[38px] left-6 flex opacity-90">
      <svg width="44" height="40" viewBox="0 0 44 40" aria-hidden="true">
        <defs>
          <linearGradient id="swirl" x1="1" y1="0" x2="0" y2="1"><stop offset="0" stopColor="#59b7e8" /><stop offset="1" stopColor="#3a6fb5" /></linearGradient>
          <linearGradient id="leaf" x1="1" y1="0" x2="0" y2="1"><stop offset="0" stopColor="#4fb783" /><stop offset=".6" stopColor="#7cc576" /><stop offset="1" stopColor="#d9c94c" /></linearGradient>
        </defs>
        <path d="M40 1Q20-1 8 11-3 22 4 31q-1-10 8-18Q22 4 40 1z" fill="url(#swirl)" />
        <path d="M36 6Q18 7 12 15 6 25 12 29q6 3 12-1 5-5 1-9-4-3-8 1 5-1 5 3-2 4-6 3-5-2-1-9Q20 9 36 6z" fill="url(#swirl)" />
        <path d="M31 11q4 5 1 13-6 10-28 14l10-4q-4 5 6 4 18-3 21-16 1-7-10-11z" fill="url(#leaf)" />
      </svg>
      <div className="flex flex-col font-bold">
        <span className="text-[21px] leading-6 text-[#4a90d2]">极光下载站</span>
        <span className="pl-[2px] font-['Liberation_Sans',sans-serif] text-base leading-5 text-[#5cbd72]">www.xz7.com</span>
      </div>
    </div>
  </div>
);

const App: React.FC = () => (
  <div className="relative flex h-screen min-h-[600px] flex-col overflow-hidden bg-[#d8d8d8] font-['Noto_Sans','Noto_Sans_CJK_SC',sans-serif]">
    <TitleBar />
    <MenuBar />
    <Ribbon />
    <div className="flex min-h-0 flex-1">
      <Worksheet />
      <PropertyPanel />
      <ToolRail />
    </div>
    <StatusBar />
    <ImeBar />
    <Watermarks />
  </div>
);

export default App;
